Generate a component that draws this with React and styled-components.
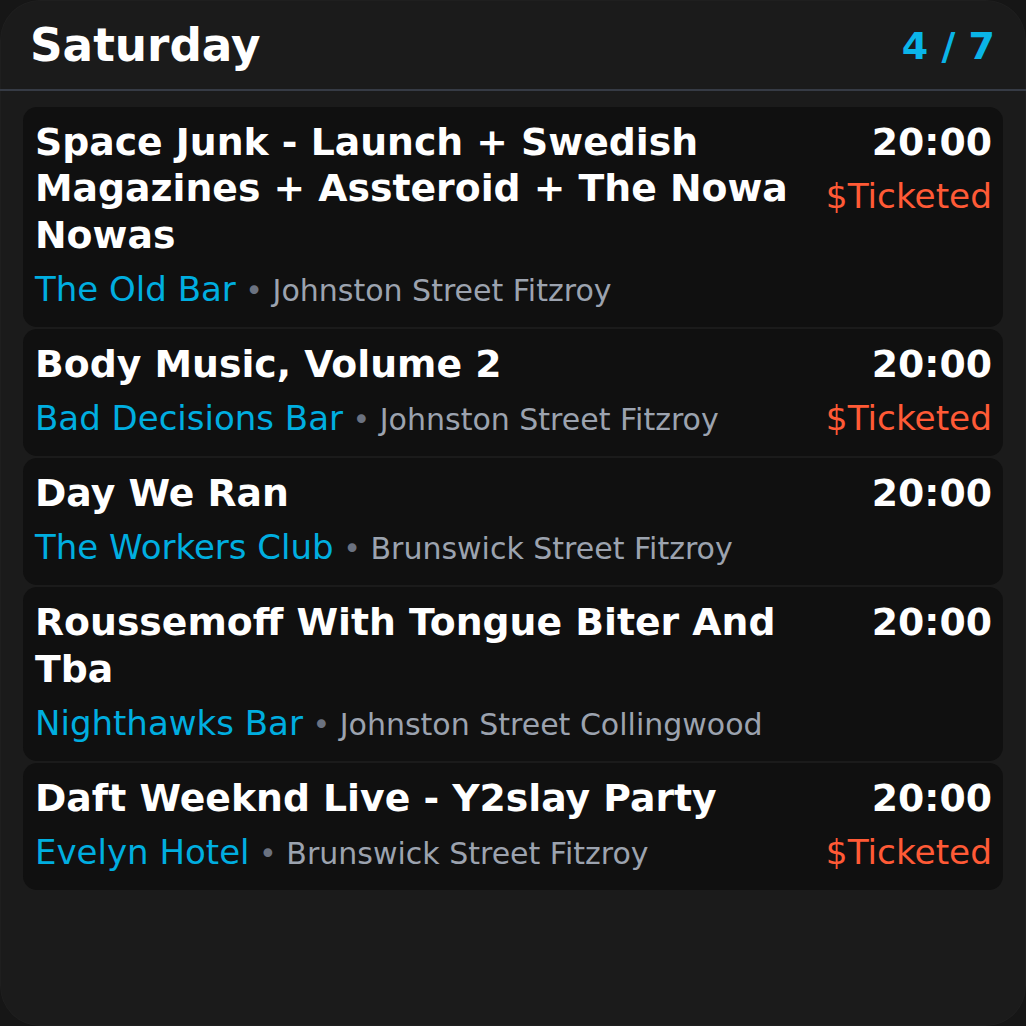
import React from "react";
import styled, { createGlobalStyle } from "styled-components";

const Global = createGlobalStyle`
  html, body { margin: 0; padding: 0; background: #161616; }
  body { font-family: "DejaVu Sans", "Liberation Sans", sans-serif; }
  * { box-sizing: border-box; }
`;

const Screen = styled.div`
  width: 1026px;
  height: 1026px;
  background: #1b1b1b;
  border-radius: 40px;
  box-shadow: inset 0 0 0 1px rgba(255, 255, 255, 0.02);
  overflow: hidden;
  display: flex;
  flex-direction: column;
`;

const Header = styled.header`
  height: 91px;
  padding: 2px 31px 0 30px;
  display: flex;
  align-items: center;
  justify-content: space-between;
  border-bottom: 2px solid #363b45;
`;

const DayTitle = styled.h1`
  margin: 0;
  font-size: 45.3px;
  font-weight: 700;
  color: #ffffff;
`;

const Counter = styled.div`
  font-size: 38px;
  font-weight: 700;
  color: #0ab4e8;
`;

const List = styled.div`
  display: flex;
  flex-direction: column;
  gap: 2px;
  padding: 16px 23px;
`;

const Card = styled.div`
  display: flex;
  justify-content: space-between;
  gap: 16px;
  padding: 12px 11px 14px 12px;
  background: #101010;
  border-radius: 14px;
`;

const Main = styled.div`
  flex: 1;
  min-width: 0;
`;

const Side = styled.div`
  flex: none;
  display: flex;
  flex-direction: column;
  align-items: flex-end;
`;

const Title = styled.div`
  font-size: 37.75px;
  font-weight: 700;
  line-height: 46.3px;
  color: #ffffff;
`;

const Time = styled(Title)`
  white-space: nowrap;
`;

const VenueRow = styled.div`
  margin-top: 7px;
  line-height: 48px;
  font-size: 34px;
  white-space: nowrap;
`;

const Venue = styled.span`
  color: #00aee0;
`;

const Address = styled.span`
  font-size: 30px;
  line-height: 1;
  color: #9ca3af;
`;

const Dot = styled.span`
  color: #6b7280;
`;

const Price = styled.div`
  margin-top: 7px;
  font-size: 34.3px;
  line-height: 48px;
  color: #ff5a36;
  white-space: nowrap;
`;

const events = [
  {
    title: "Space Junk - Launch + Swedish Magazines + Assteroid + The Nowa Nowas",
    venue: "The Old Bar",
    address: "Johnston Street Fitzroy",
    time: "20:00",
    ticketed: true,
  },
  {
    title: "Body Music, Volume 2",
    venue: "Bad Decisions Bar",
    address: "Johnston Street Fitzroy",
    time: "20:00",
    ticketed: true,
  },
  {
    title: "Day We Ran",
    venue: "The Workers Club",
    address: "Brunswick Street Fitzroy",
    time: "20:00",
    ticketed: false,
  },
  {
    title: "Roussemoff With Tongue Biter And Tba",
    venue: "Nighthawks Bar",
    address: "Johnston Street Collingwood",
    time: "20:00",
    ticketed: false,
  },
  {
    title: "Daft Weeknd Live - Y2slay Party",
    venue: "Evelyn Hotel",
    address: "Brunswick Street Fitzroy",
    time: "20:00",
    ticketed: true,
  },
];

export default function App() {
  return (
    <>
      <Global />
      <Screen>
        <Header>
          <DayTitle>Saturday</DayTitle>
          <Counter>4 / 7</Counter>
        </Header>
        <List>
          {events.map((e) => (
            <Card key={e.title}>
              <Main>
                <Title>{e.title}</Title>
                <VenueRow>
                  <Venue>{e.venue}</Venue>
                  <Address>
                    {" "}
                    <Dot>•</Dot> {e.address}
                  </Address>
                </VenueRow>
              </Main>
              <Side>
                <Time>{e.time}</Time>
                {e.ticketed && <Price>$Ticketed</Price>}
              </Side>
            </Card>
          ))}
        </List>
      </Screen>
    </>
  );
}
